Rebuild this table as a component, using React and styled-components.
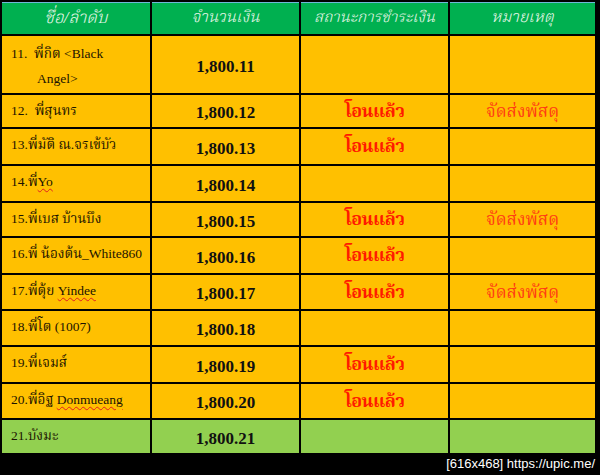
import React from "react"
import styled, { createGlobalStyle } from "styled-components"

const GlobalStyle = createGlobalStyle`
  html, body {
    margin: 0;
    padding: 0;
    background: #000;
  }
`

const rows = [
  { name: "11.  พี่กิต <Black", more: "Angel>", amount: "1,800.11", h: 57 },
  { name: "12.  พี่สุนทร", amount: "1,800.12", paid: true, note: true, h: 32 },
  { name: "13.พี่มัติ ณ.จรเข้บัว", amount: "1,800.13", paid: true, h: 35 },
  { name: "14.พี่", typo: "Yo", amount: "1,800.14", h: 35 },
  { name: "15.พี่เบส บ้านบึง", amount: "1,800.15", paid: true, note: true, h: 33 },
  { name: "16.พี่ น้องต้น_White860", amount: "1,800.16", paid: true, h: 35 },
  { name: "17.พี่ตุ้ย ", typo: "Yindee", amount: "1,800.17", paid: true, note: true, h: 34 },
  { name: "18.พี่โต (1007)", amount: "1,800.18", h: 34 },
  { name: "19.พี่เจมส์", amount: "1,800.19", paid: true, h: 35 },
  { name: "20.พี่อิฐ ", typo: "Donmueang", amount: "1,800.20", paid: true, h: 34 },
  { name: "21.บังมะ", amount: "1,800.21", green: true, h: 33 },
]

export default function App() {
  const template = "32px " + rows.map(r => r.h + "px").join(" ")
  return (
    <>
      <GlobalStyle />
      <Page>
        <Table style={{ gridTemplateRows: template }}>
          <Head>ชื่อ/ลำดับ</Head>
          <Head $size={16}>จำนวนเงิน</Head>
          <Head $size={15.5}>สถานะการชำระเงิน</Head>
          <Head $size={16}>หมายเหตุ</Head>
          {rows.map((r, i) => (
            <React.Fragment key={i}>
              <NameCell $green={r.green}>
                <NameLine $wrap={!!r.more}>
                  {r.name}
                  {r.typo && <Wavy>{r.typo}</Wavy>}
                </NameLine>
                {r.more && <Indent>{r.more}</Indent>}
              </NameCell>
              <AmountCell $green={r.green}>{r.amount}</AmountCell>
              <StatusCell $green={r.green}>{r.paid ? "โอนแล้ว" : ""}</StatusCell>
              <NoteCell $green={r.green}>{r.note ? "จัดส่งพัสดุ" : ""}</NoteCell>
            </React.Fragment>
          ))}
        </Table>
        <Footer>
          <Stamp>[616x468] https://upic.me/</Stamp>
        </Footer>
      </Page>
    </>
  )
}

const thai = `"Liberation Serif", "Noto Serif Thai", "Noto Sans Thai", "DejaVu Serif", serif`

const Page = styled.div`
  width: 600px;
  height: 475px;
  background: #000;
  overflow: hidden;
`

const Table = styled.div`
  display: grid;
  grid-template-columns: 148px 147px 147px 145px;
  column-gap: 2px;
  row-gap: 2px;
  padding: 2px 5px 2px 2px;
  background: #000;
`

const Head = styled.div`
  background: #00b050;
  border-top: 1px solid #6fb7d8;
  color: #e4f6e6;
  font-family: ${thai};
  font-style: italic;
  font-weight: 300;
  font-size: ${p => p.$size || 17}px;
  display: flex;
  align-items: center;
  justify-content: center;
  padding-bottom: 1px;
`

const Cell = styled.div`
  background: ${p => (p.$green ? "#92d050" : "#ffc000")};
`

const NameCell = styled(Cell)`
  font-family: ${thai};
  font-size: 13.5px;
  color: #1c1400;
  padding: 7px 0 0 9px;
  display: flex;
  flex-direction: column;
`

const NameLine = styled.span`
  line-height: ${p => (p.$wrap ? "22px" : "18px")};
  white-space: pre;
`

const Indent = styled.span`
  line-height: 28px;
  padding-left: 26px;
`

const Wavy = styled.span`
  text-decoration: underline wavy #e02020;
  text-decoration-thickness: 1px;
  text-underline-offset: 2px;
`

const AmountCell = styled(Cell)`
  font-family: "Liberation Serif", serif;
  font-weight: bold;
  font-size: 17px;
  color: #111;
  display: flex;
  align-items: center;
  justify-content: center;
  padding-top: 4px;
`

const StatusCell = styled(Cell)`
  font-family: ${thai};
  font-weight: bold;
  font-size: 18px;
  letter-spacing: -0.6px;
  color: #ff1a00;
  display: flex;
  align-items: center;
  justify-content: center;
  padding-top: 2px;
`

const NoteCell = styled(Cell)`
  font-family: ${thai};
  font-size: 17px;
  color: #ff3c14;
  display: flex;
  align-items: center;
  justify-content: center;
  padding-top: 2px;
`

const Footer = styled.div`
  display: flex;
  justify-content: flex-end;
  padding: 0 5px 0 0;
`

const Stamp = styled.div`
  color: #fff;
  font-family: "Liberation Sans", sans-serif;
  font-size: 13px;
  line-height: 18px;
`
